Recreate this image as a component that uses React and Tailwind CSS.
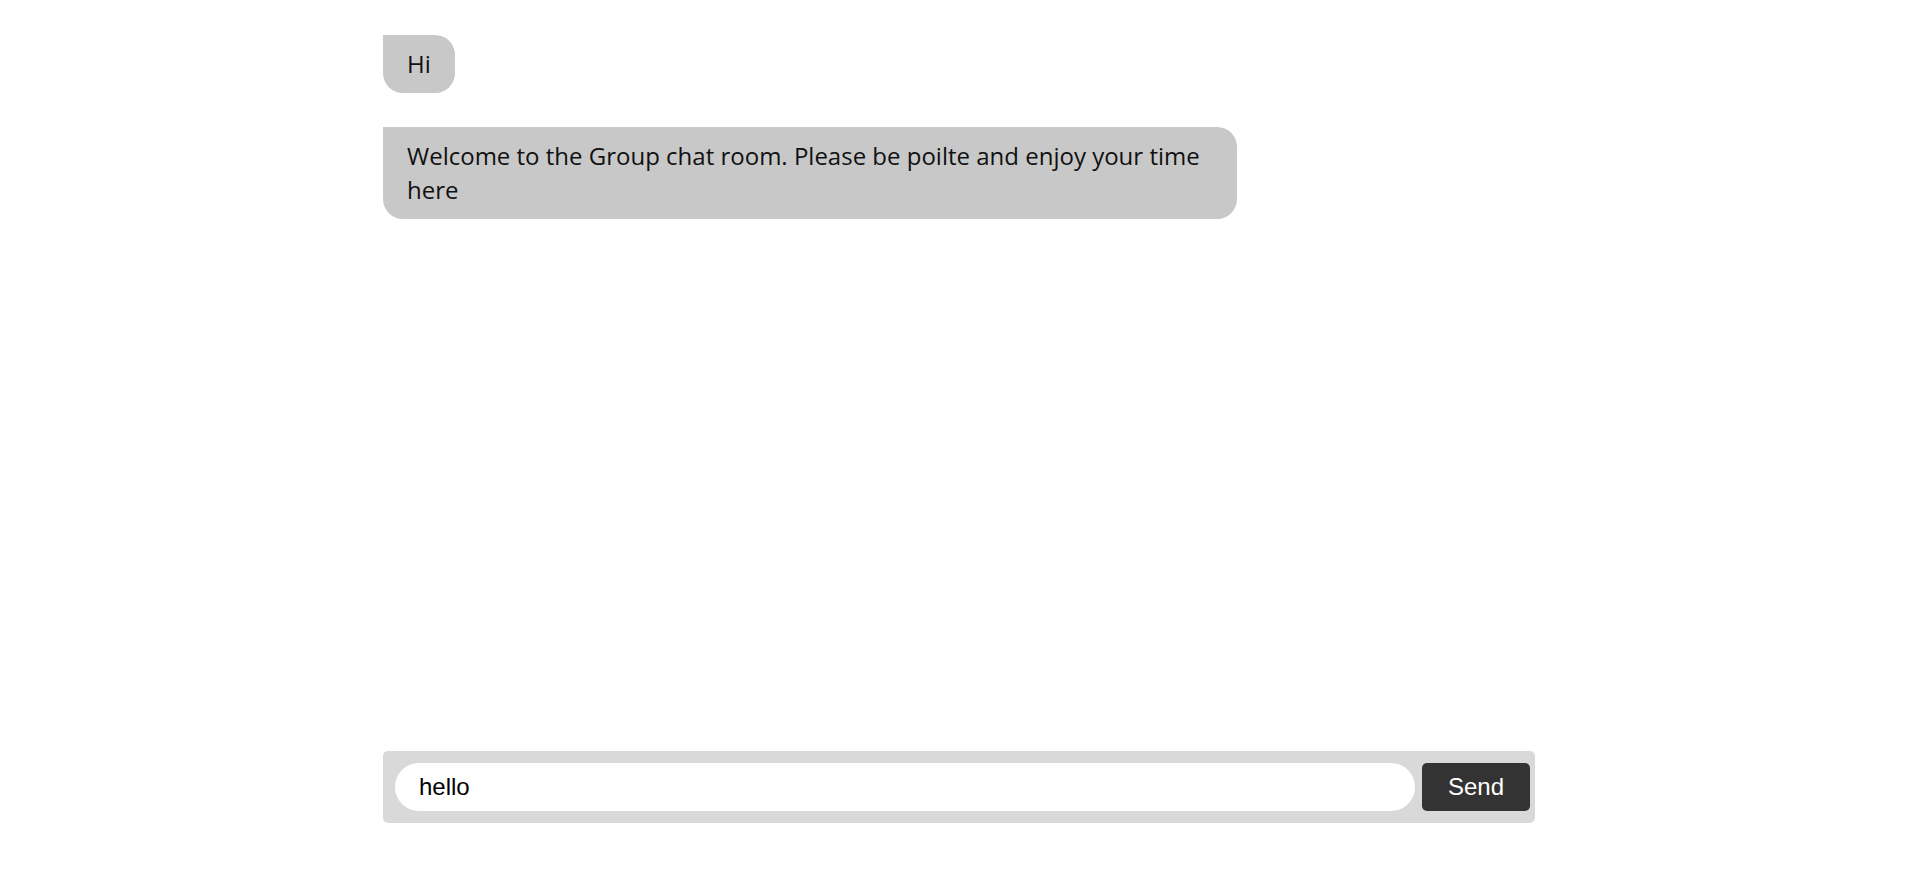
import React, { useState } from 'react'

const messages = [
  { id: 1, text: 'Hi' },
  { id: 2, text: 'Welcome to the Group chat room. Please be poilte and enjoy your time here' },
]

const App = () => {
  const [draft, setDraft] = useState('hello')

  return (
    <div className="h-screen w-full bg-white flex flex-col">
      <div className="w-[1152px] ml-[383px] flex-1 flex flex-col gap-[34px] pt-[35px] items-start">
        {messages.map(m => (
          <div
            key={m.id}
            className="bg-[#c8c8c8] text-[#111] px-6 py-3 text-[24px] leading-[34px] rounded-[20px] rounded-tl-none max-w-[854px]"
            style={{ fontFamily: '"Open Sans", "Noto Sans", sans-serif' }}
          >
            {m.text}
          </div>
        ))}
      </div>

      {/* Input bar */}
      <form
        onSubmit={e => e.preventDefault()}
        className="w-[1152px] ml-[383px] mb-[56px] bg-[#d9d9d9] rounded-[5px] flex items-center gap-[7px] pl-3 pr-[5px] py-3"
      >
        <input
          type="text"
          value={draft}
          onChange={e => setDraft(e.target.value)}
          className="flex-1 h-12 bg-white rounded-full px-6 text-[24px] text-black outline-none"
          style={{ fontFamily: '"Liberation Sans", Arial, sans-serif' }}
        />
        <button
          type="submit"
          className="w-[108px] h-12 bg-[#333] text-white rounded-[5px] text-[24px]"
          style={{ fontFamily: '"Liberation Sans", Arial, sans-serif' }}
        >
          Send
        </button>
      </form>
    </div>
  )
}

export default App
